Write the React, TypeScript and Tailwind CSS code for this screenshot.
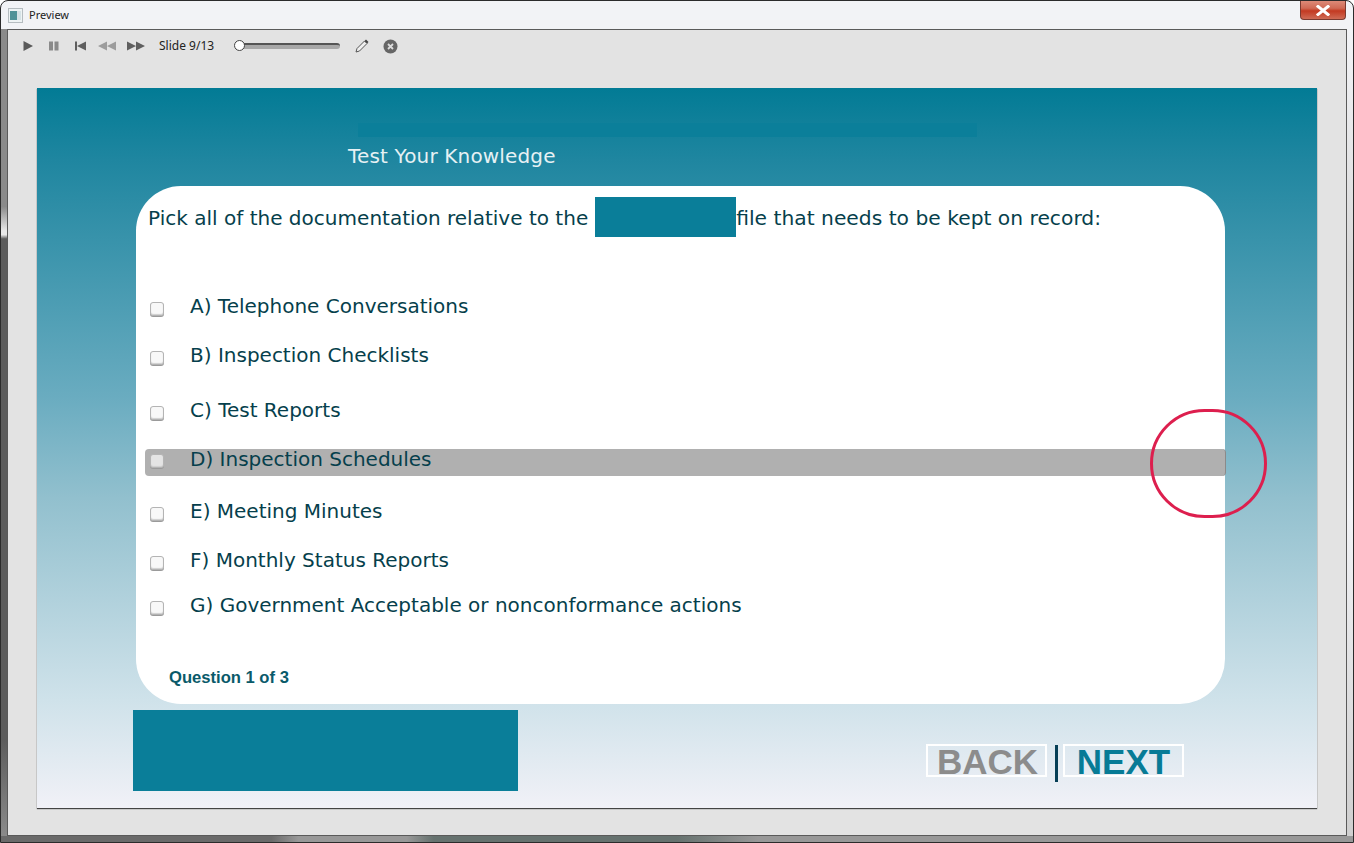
import React from "react";

const options = [
  { label: "A) Telephone Conversations", h: "h-[49px]" },
  { label: "B) Inspection Checklists", h: "h-[55px]" },
  { label: "C) Test Reports", h: "h-[49px]" },
  { label: "D) Inspection Schedules", h: "h-[52px]", active: true },
  { label: "E) Meeting Minutes", h: "h-[49px]" },
  { label: "F) Monthly Status Reports", h: "h-[45px]" },
  { label: "G) Government Acceptable or nonconformance actions", h: "h-[45px]" },
];

function Tool({ children }: { children: React.ReactNode }) {
  return (
    <svg width="18" height="12" viewBox="0 0 18 12" fill="#5f5f5f" className="shrink-0">
      {children}
    </svg>
  );
}

function Box({ active }: { active?: boolean }) {
  return (
    <span
      className={`block h-[14px] w-[14px] shrink-0 rounded-[3px] border border-[#b4b4b4] shadow-[inset_0_-1px_1px_#cfcfcf,0_1px_0_#9a9a9a] ${
        active ? "bg-[#e4e4e4]" : "bg-[#f8f8f8]"
      }`}
    />
  );
}

export default function App() {
  return (
    <div className="relative flex h-[843px] w-[1354px] flex-col overflow-hidden rounded-t-[8px] border border-[#2b2b2b] bg-[#f2f3f6] font-['Liberation_Sans',sans-serif]">
      <div className="flex h-[28px] shrink-0 items-center pl-[7px]">
        <svg width="15" height="15" viewBox="0 0 15 15" className="shrink-0">
          <rect x="0.5" y="0.5" width="14" height="14" fill="#eef3f4" stroke="#b5bcc0" />
          <rect x="2" y="3" width="7" height="9" fill="#4f9298" />
          <rect x="9" y="3" width="4" height="9" fill="#d5e2e6" />
        </svg>
        <span className="ml-[6px] font-['Noto_Sans',sans-serif] text-[11px] text-[#222]">Preview</span>
        <div className="ml-auto mr-[7px] flex h-[19px] w-[46px] items-center justify-center self-start rounded-b-[4px] border border-t-0 border-[#7a3a30] bg-[linear-gradient(to_bottom,#dd8a78,#d06a55_40%,#c33a22_55%,#cf6b55)]">
          <svg width="14" height="11" viewBox="0 0 14 11">
            <path d="M2 1.5 L12 9.5 M12 1.5 L2 9.5" stroke="#ffffff" strokeWidth="3" strokeLinecap="square" />
          </svg>
        </div>
      </div>

      <div className="flex min-h-0 flex-1">
        <div className="w-[6px] shrink-0 bg-[linear-gradient(to_bottom,#8a8a8a_0,#8a8a8a_22%,#e8e8e8_25%,#e8e8e8_25.5%,#5c5c5c_26%,#5c5c5c_88%,#8a8a8a_100%)]" />
        <div className="flex min-w-0 flex-1 flex-col border border-[#5a5a5a] bg-[#e3e3e3]">
          <div className="flex h-[58px] shrink-0 items-start pl-[14px] pt-[10px]">
            <div className="flex h-[12px] items-center">
              <svg width="12" height="12" viewBox="0 0 12 12" fill="#5a5a5a" className="shrink-0">
                <path d="M1.5 1 L11 6 L1.5 11 Z" />
              </svg>
              <svg width="12" height="12" viewBox="0 0 12 12" fill="#8a8a8a" className="ml-[14px] shrink-0">
                <rect x="1" y="1.5" width="4" height="9" />
                <rect x="6.5" y="1.5" width="4" height="9" />
              </svg>
              <svg width="13" height="12" viewBox="0 0 13 12" fill="#5f5f5f" className="ml-[14px] shrink-0">
                <rect x="1" y="1.5" width="2" height="9" />
                <path d="M3 6 L12 1.5 L12 10.5 Z" />
              </svg>
              <div className="ml-[11px]">
                <Tool>
                  <path d="M0 6 L9 1.5 L9 10.5 Z M9 6 L18 1.5 L18 10.5 Z" fill="#9c9c9c" />
                </Tool>
              </div>
              <div className="ml-[11px]">
                <Tool>
                  <path d="M0 1.5 L9 6 L0 10.5 Z M9 1.5 L18 6 L9 10.5 Z" />
                </Tool>
              </div>
              <span className="ml-[14px] w-[55px] whitespace-nowrap font-['Noto_Sans',sans-serif] text-[12px] text-[#222]">Slide 9/13</span>
              <div className="relative ml-[21px] h-[6px] w-[105px] rounded-full border-t-2 border-[#555] bg-[#a8a8a8]">
                <span className="absolute -left-[1px] -top-[5px] h-[11px] w-[11px] rounded-full border border-[#444] bg-white" />
              </div>
              <svg width="16" height="16" viewBox="0 0 16 16" className="ml-[14px] shrink-0" fill="none">
                <path d="M2 14 L3 10.5 L10.5 3 L13 5.5 L5.5 13 Z" stroke="#555" fill="#f0f0f0" />
                <path d="M10.5 3 L12 1.5 L14.5 4 L13 5.5 Z" fill="#444" />
              </svg>
              <svg width="15" height="15" viewBox="0 0 15 15" className="ml-[13px] shrink-0">
                <circle cx="7.5" cy="7.5" r="7" fill="#666" />
                <path d="M5 5 L10 10 M10 5 L5 10" stroke="#dcdcdc" strokeWidth="1.8" />
              </svg>
            </div>
          </div>

          <div className="mx-[29px] flex h-[720px] w-[1280px] shrink-0 flex-col bg-[linear-gradient(to_bottom,#027b95_0%,#1f86a0_10%,#6aacc0_43%,#92c0ce_57%,#cfe2ea_85%,#f1f1f7_100%)] shadow-[0_1px_1px_#444]">
            <div className="ml-[321px] mt-[35px] h-[14px] w-[619px] shrink-0 bg-[#0b7f9a]" />
            <div className="ml-[311px] mt-[7px] font-['DejaVu_Sans',sans-serif] text-[20px] leading-[24px] tracking-[0.15px] text-[#e6f1f4]">
              Test Your Knowledge
            </div>
            <div className="ml-[99px] mt-[18px] flex h-[518px] w-[1089px] shrink-0 flex-col rounded-[45px] bg-white font-['DejaVu_Sans',sans-serif] text-[#063f4c]">
              <div className="ml-[12px] mt-[11px] flex h-[40px] items-center whitespace-nowrap">
                <span className="pt-[2px] text-[20.05px]">Pick all of the documentation relative to the</span>
                <span className="ml-[7px] h-[40px] w-[141px] bg-[#0a7e99]" />
                <span className="pt-[2px] text-[20.25px]">file that needs to be kept on record:</span>
              </div>
              <div className="mt-[57px] flex flex-col">
                {options.map((o) => (
                  <div key={o.label} className={`relative flex items-start ${o.h}`}>
                    {o.active && (
                      <div className="absolute left-[9px] top-[2px] h-[27px] w-[1081px] rounded-[4px] border-r border-[#8a8a8a] bg-[#b0b0b0]" />
                    )}
                    <span className={`relative ml-[14px] ${o.active ? "mt-[7px]" : "mt-[8px]"}`}>
                      <Box active={o.active} />
                    </span>
                    <span className="relative ml-[26px] whitespace-nowrap text-[20px] leading-[24px]">{o.label}</span>
                  </div>
                ))}
              </div>
              <div className="ml-[33px] mt-[30px] font-['Liberation_Sans',sans-serif] text-[16.6px] font-bold leading-[20px] text-[#0a5a6a]">
                Question 1 of 3
              </div>
            </div>
            <div className="mt-[6px] flex items-start">
              <div className="ml-[96px] h-[81px] w-[385px] bg-[#0a7e99]" />
              <div className="ml-[408px] mt-[34px] flex items-start font-['Liberation_Sans',sans-serif] text-[35px] font-bold leading-[33px]">
                <div className="flex h-[33px] w-[121px] items-center justify-center border-2 border-white pl-[2px] pt-[1px] text-[#8c8c8c]">BACK</div>
                <div className="ml-[8px] mt-[1px] h-[37px] w-[3px] bg-[#063f56]" />
                <div className="ml-[5px] flex h-[33px] w-[121px] items-center justify-center border-2 border-white pt-[1px] text-[#077b96]">NEXT</div>
              </div>
            </div>
          </div>
        </div>
        <div className="w-[6px] shrink-0 bg-[linear-gradient(to_bottom,#f2f3f6_0,#d8d8d8_30%,#f2f3f6_60%,#cfcfcf_100%)]" />
      </div>
      <div className="h-[6px] shrink-0 bg-[linear-gradient(to_right,#6a6a6a_0,#6a6a6a_20%,#989898_22%,#989898_30%,#66726f_32%,#66726f_50%,#989898_56%,#989898_100%)]" />

      <div className="absolute left-[1149px] top-[408px] h-[109px] w-[117px] rounded-full border-[3px] border-[#dd1f4e]" />
    </div>
  );
}
